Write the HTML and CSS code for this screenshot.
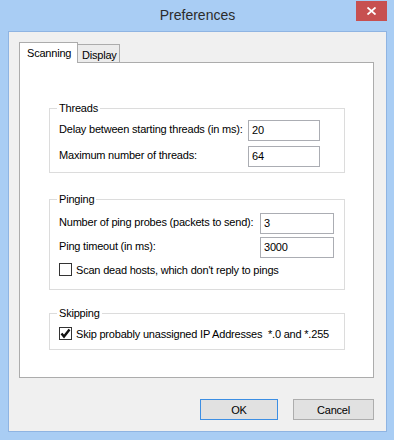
FILE: index.html
```
<html>
<head>
<title>Preferences</title>
<meta name="viewport" content="width=device-width">
<link rel="stylesheet" href="styles.css">
</head>
<body>

<div class="window">
	<div class="titlebar">
		<span class="title">Preferences</span>
		<div class="close">
			<svg width="9" height="8" viewBox="0 0 9 8"><path d="M0.5 0.5 L8.5 7.5 M8.5 0.5 L0.5 7.5" stroke="#fff" stroke-width="1.8" fill="none"/></svg>
		</div>
	</div>

	<div class="client">
		<div class="tabs">
			<div class="tab active">Scanning</div>
			<div class="tab">Display</div>
		</div>

		<div class="panel">
			<fieldset class="group threads">
				<legend>Threads</legend>
				<div class="row">
					<label>Delay between starting threads (in ms):</label>
					<input type="text" class="field" value="20">
				</div>
				<div class="row">
					<label>Maximum number of threads:</label>
					<input type="text" class="field" value="64">
				</div>
			</fieldset>

			<fieldset class="group pinging">
				<legend>Pinging</legend>
				<div class="row">
					<label>Number of ping probes (packets to send):</label>
					<input type="text" class="field" value="3">
				</div>
				<div class="row">
					<label>Ping timeout (in ms):</label>
					<input type="text" class="field" value="3000">
				</div>
				<div class="check">
					<span class="box"></span>
					<span>Scan dead hosts, which don't reply to pings</span>
				</div>
			</fieldset>

			<fieldset class="group skipping">
				<legend>Skipping</legend>
				<div class="check">
					<span class="box"><svg width="11" height="11" viewBox="0 0 11 11"><path d="M1.5 5.5 L4 8.5 L9.5 1.5" stroke="#111" stroke-width="2.4" fill="none"/></svg></span>
					<span>Skip probably unassigned IP Addresses &nbsp;*.0 and *.255</span>
				</div>
			</fieldset>
		</div>

		<div class="buttons">
			<button class="btn default">OK</button>
			<button class="btn cancel">Cancel</button>
		</div>
	</div>
</div>

</body>
</html>
```

FILE: styles.css
```
* {
	box-sizing: border-box;
}

body {
	margin: 0;
	font-family: "Liberation Sans", Arial, sans-serif;
	font-size: 11px;
	letter-spacing: -0.2px;
	color: #000;
}

.window {
	width: 394px;
	height: 440px;
	background: #a9cdf4;
	padding: 0 7px 8px 8px;
}

.titlebar {
	position: relative;
	height: 31px;
	text-align: center;
}

.title {
	font-size: 14px;
	letter-spacing: 0;
	line-height: 30px;
	color: #2b2b2b;
}

.close {
	position: absolute;
	top: 1px;
	right: 0;
	width: 31px;
	height: 20px;
	background: #c75050;
	display: flex;
	align-items: center;
	justify-content: center;
}

.client {
	height: 401px;
	background: #f0f0f0;
	border: 1px solid #8fb4e2;
	padding: 10px 12px 11px 10px;
}

.tabs {
	display: flex;
	align-items: flex-end;
	height: 20px;
}

.tab {
	height: 18px;
	padding: 3px 0 0 4px;
	line-height: 14px;
	border: 1px solid #acacac;
	border-bottom: none;
	background: #ececec;
	margin-left: -1px;
	width: 43px;
}

.tab.active {
	position: relative;
	z-index: 1;
	height: 21px;
	width: 59px;
	margin-left: 0;
	margin-bottom: -1px;
	padding-left: 7px;
	background: #fff;
}

.panel {
	height: 316px;
	background: #fff;
	border: 1px solid #acacac;
	padding: 38px 28px 0 29px;
}

.group {
	margin: 0;
	border: 1px solid #dcdcdc;
	padding: 0 7px;
	width: 296px;
}

.group legend {
	padding: 0 2px;
	line-height: 15px;
}

.threads {
	padding-top: 4px;
	padding-bottom: 5px;
}

.threads .row {
	grid-template-columns: 189px 72px;
}

.threads .row + .row {
	margin-top: 5px;
}

.pinging {
	margin-top: 19px;
	padding-top: 6px;
	padding-bottom: 12px;
}

.pinging .row {
	grid-template-columns: 201px 74px;
}

.pinging .row + .row {
	margin-top: 3px;
}

.pinging .check {
	margin-top: 4px;
}

.skipping {
	margin-top: 16px;
	padding-top: 5px;
	padding-bottom: 8px;
}

.row {
	display: grid;
	padding-left: 2px;
	height: 21px;
}

.row label {
	line-height: 15px;
	padding-top: 2px;
	white-space: nowrap;
}

.field {
	height: 21px;
	border: 1px solid #abadb3;
	padding: 0 0 1px 3px;
	font-family: "Liberation Sans", Arial, sans-serif;
	font-size: 11px;
	letter-spacing: -0.2px;
	color: #000;
	outline: none;
}

.check {
	display: flex;
	align-items: center;
	gap: 4px;
	height: 15px;
	padding-left: 2px;
	white-space: nowrap;
}

.box {
	width: 13px;
	height: 13px;
	border: 1px solid #333;
	background: #fff;
	display: flex;
	align-items: center;
	justify-content: center;
}

.buttons {
	display: flex;
	justify-content: flex-end;
	gap: 15px;
	margin-top: 21px;
}

.btn {
	height: 21px;
	background: #e1e1e1;
	border: 1px solid #adadad;
	font-family: "Liberation Sans", Arial, sans-serif;
	font-size: 11px;
	letter-spacing: -0.2px;
	color: #000;
	padding: 0;
}

.btn.default {
	width: 78px;
	border-color: #3c8ee3;
}

.btn.cancel {
	width: 81px;
}
```
